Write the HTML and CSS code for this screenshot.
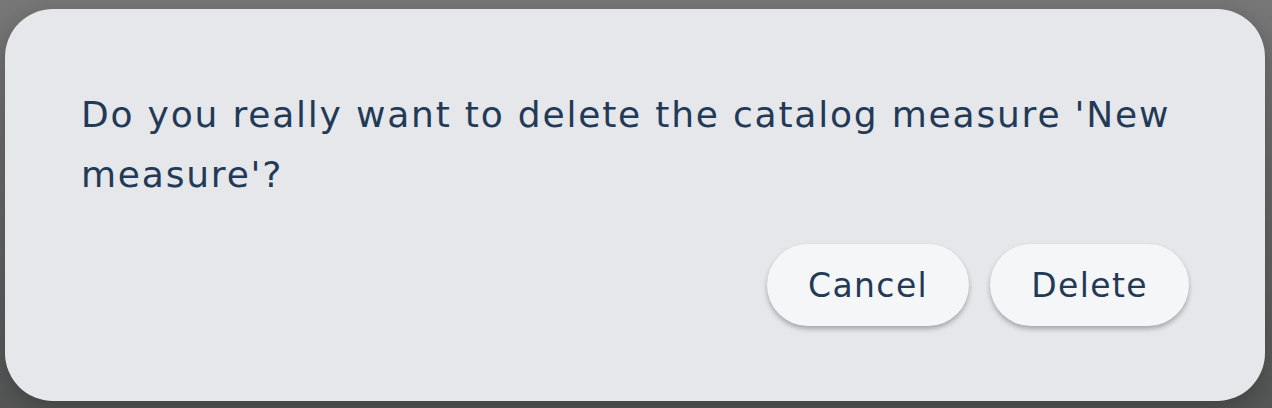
FILE: index.html
```html
<!DOCTYPE html>
<html lang="en">
<head>
<meta charset="utf-8">
<title>Delete catalog measure</title>
<link rel="stylesheet" href="styles.css">
</head>
<body>
<div class="backdrop">
  <div class="dialog" role="dialog" aria-modal="true">
    <p class="message">Do you really want to delete the catalog measure 'New measure'?</p>
    <div class="actions">
      <button class="btn">Cancel</button>
      <button class="btn">Delete</button>
    </div>
  </div>
</div>
</body>
</html>
```

FILE: styles.css
```css
html, body {
  margin: 0;
  padding: 0;
}
body {
  width: 1272px;
  height: 408px;
  overflow: hidden;
  background: linear-gradient(#777777 0%, #6a6a6a 40%, #555756 100%);
  font-family: "DejaVu Sans", "Open Sans", sans-serif;
}
.backdrop {
  box-sizing: border-box;
  height: 408px;
  padding: 9px 7px 7px 5px;
  display: flex;
}
.dialog {
  flex: 1;
  box-sizing: border-box;
  background: #e6e7eb;
  border-radius: 48px;
  padding: 76px 76px 75px 76px;
  display: flex;
  flex-direction: column;
  box-shadow: 0 8px 24px rgba(0, 0, 0, 0.25);
}
.message {
  margin: 0;
  font-size: 36px;
  line-height: 60px;
  letter-spacing: 1.8px;
  color: #233a57;
}
.actions {
  margin-top: auto;
  display: flex;
  justify-content: flex-end;
  gap: 21px;
}
.btn {
  font-family: inherit;
  font-size: 33px;
  letter-spacing: 1.4px;
  color: #233a57;
  background: #f5f6f8;
  border: none;
  border-radius: 41px;
  height: 82px;
  padding: 0 41px;
  box-shadow: 0 3px 5px rgba(0, 0, 0, 0.28);
}
```
